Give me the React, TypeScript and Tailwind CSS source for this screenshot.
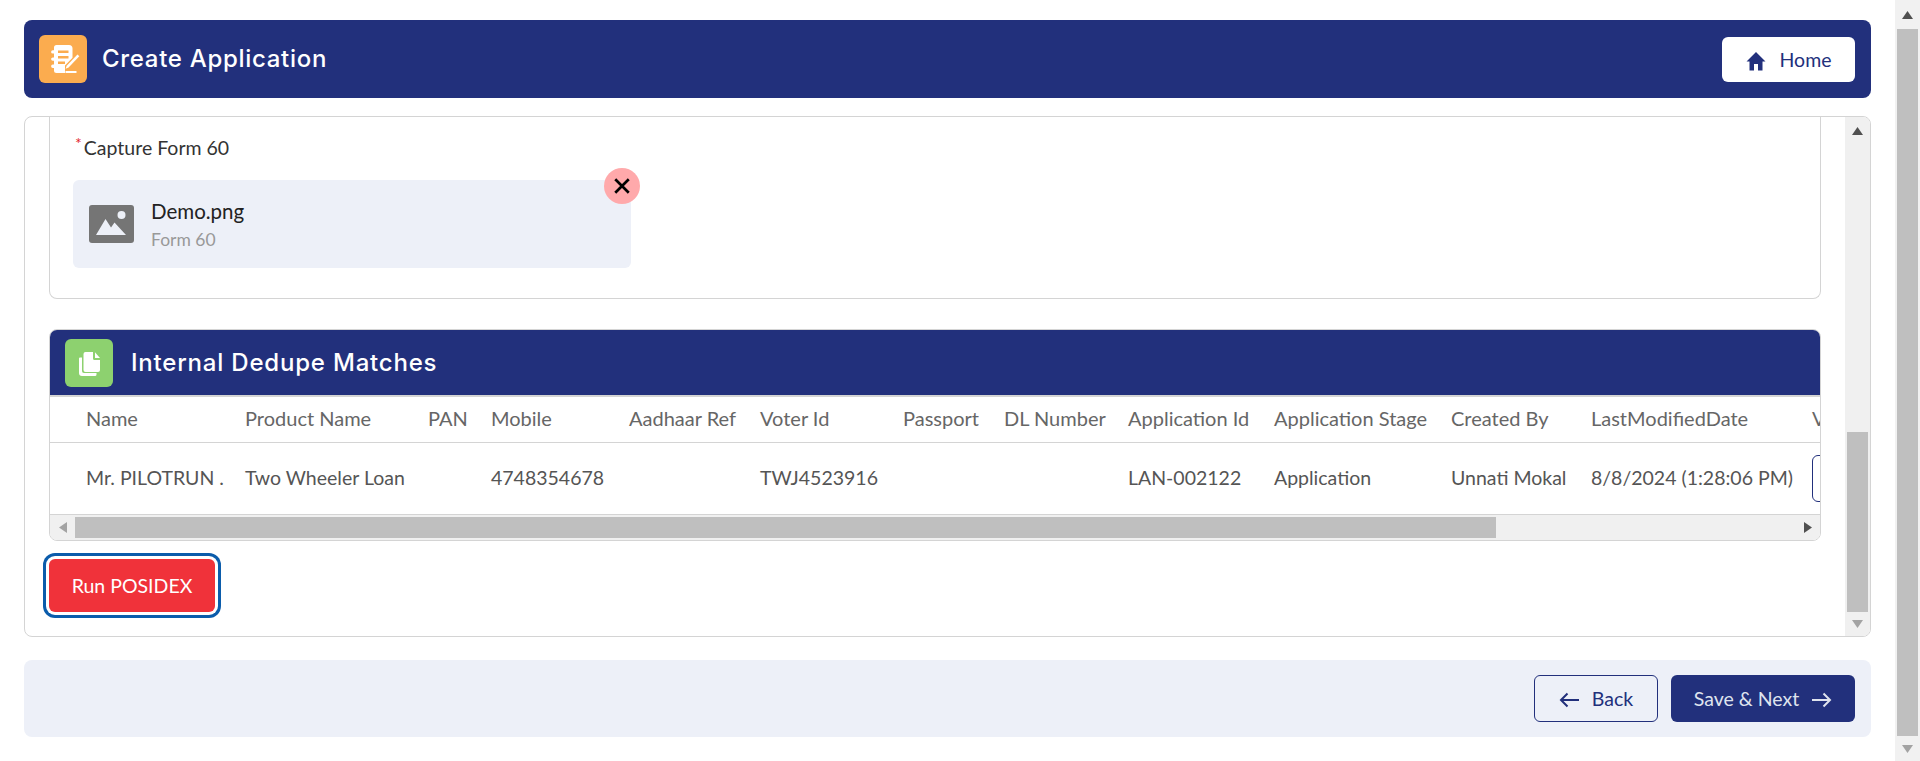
import React from "react";

const columns = [
  { label: "Name", value: "Mr. PILOTRUN .", width: "w-[195px]" },
  { label: "Product Name", value: "Two Wheeler Loan", width: "w-[183px]" },
  { label: "PAN", value: "", width: "w-[63px]" },
  { label: "Mobile", value: "4748354678", width: "w-[138px]" },
  { label: "Aadhaar Ref", value: "", width: "w-[131px]" },
  { label: "Voter Id", value: "TWJ4523916", width: "w-[143px]" },
  { label: "Passport", value: "", width: "w-[101px]" },
  { label: "DL Number", value: "", width: "w-[124px]" },
  { label: "Application Id", value: "LAN-002122", width: "w-[146px]" },
  { label: "Application Stage", value: "Application", width: "w-[177px]" },
  { label: "Created By", value: "Unnati Mokal", width: "w-[140px]" },
  { label: "LastModifiedDate", value: "8/8/2024 (1:28:06 PM)", width: "w-[221px]" },
];

function Arrow({ dir, color = "#505050" }: { dir: "up" | "down" | "left" | "right"; color?: string }) {
  const points = {
    up: "0,8 5.5,0 11,8",
    down: "0,0 5.5,8 11,0",
    left: "8,0 8,11 0,5.5",
    right: "0,0 0,11 8,5.5",
  }[dir];
  const box = dir === "up" || dir === "down" ? "0 0 11 8" : "0 0 8 11";
  const size = dir === "up" || dir === "down" ? "w-[11px] h-[8px]" : "w-[8px] h-[11px]";
  return (
    <svg viewBox={box} className={size}>
      <polygon points={points} fill={color} />
    </svg>
  );
}

function NotebookIcon() {
  return (
    <svg viewBox="0 0 48 48" className="w-12 h-12">
      <path fill="#fff" d="M15 12.5a2.5 2.5 0 0 1 2.5-2.5H30a3.5 3.5 0 0 1 3.5 3.5v9.2L26 30.5V38h-8.5a2.5 2.5 0 0 1-2.5-2.5V33h-1.200a1.600 1.600 0 0 1 0-3.400H15v-3.800h-1.200a1.600 1.600 0 0 1 0-3.400H15v-3.800h-1.200a1.600 1.600 0 0 1 0-3.400H15z" />
      <path fill="#fbac4f" d="M19 15.500h10.500v2.400H19zM19 21h10.500v2.400H19zM19 26.500h7v2.400h-7z" />
      <path fill="#fff" d="M38.500 19.500l1.800 1.700-10.700 11.300-3 1.200 1.100-3z" />
      <path fill="#fff" d="M26.500 36h11v2h-11z" />
    </svg>
  );
}

function FilesIcon() {
  return (
    <svg viewBox="0 0 48 48" className="w-12 h-12">
      <path fill="#fff" d="M15 18.500h2V32a2 2 0 0 0 2 2h12.500v1.500a1.500 1.500 0 0 1-1.500 1.500H17a3 3 0 0 1-3-3V19.500a1 1 0 0 1 1-1z" />
      <path fill="#fff" d="M20.500 13H28v6.500a1.500 1.500 0 0 0 1.500 1.500H35v10a2 2 0 0 1-2 2H20.500a2 2 0 0 1-2-2V15a2 2 0 0 1 2-2z" />
      <path fill="#fff" d="M30 13.200l5 5.800h-5z" />
    </svg>
  );
}

function ImageIcon() {
  return (
    <svg viewBox="0 0 45 38" className="w-[45px] h-[38px]">
      <rect width="45" height="38" rx="3" fill="#757575" />
      <circle cx="32.500" cy="10" r="4" fill="#edf0f8" />
      <path fill="#edf0f8" d="M7 30l9.500-16 5.500 8.500 3.500-5 11.500 12.500z" />
    </svg>
  );
}

export default function App() {
  return (
    <div className="flex h-screen overflow-hidden bg-white text-[19.5px] font-['Lato',sans-serif]">
      <div className="flex-1 min-w-0 pl-6 pr-6 pt-5 flex flex-col">
        <header className="h-[78px] shrink-0 rounded-lg bg-[#22307c] flex items-center pl-[15px] pr-4">
          <div className="w-12 h-12 rounded-md bg-[#fbac4f]">
            <NotebookIcon />
          </div>
          <h1 className="ml-[15px] text-white text-[24px] tracking-[0.7px] font-medium font-['Inter',sans-serif]">Create Application</h1>
          <button className="ml-auto w-[133px] h-[45px] rounded-md bg-white text-[#22307c] flex items-center justify-center gap-[14px]">
            <svg viewBox="0 0 20 20" className="w-5 h-5 mt-[3px]">
              <path fill="#22307c" d="M10 1L0.500 10.500H3.500V19.500H8V13H12V19.500H16.500V10.500H19.500z" />
            </svg>
            <span className="mt-[1px]">Home</span>
          </button>
        </header>

        <main className="mt-[18px] h-[521px] shrink-0 rounded-lg border border-[#d4d4d4] flex overflow-hidden">
          <div className="flex-1 min-w-0 pl-6 pr-6">
            <section className="h-[182px] border-x border-b border-[#d4d4d4] rounded-b-lg pl-[23px] pt-[19px]">
              <label className="flex h-6 items-center text-[#333]">
                <span className="text-[#e3242b] text-[16px] -mt-[11px] mr-[2px] ml-[2px]">*</span>
                <span>Capture Form 60</span>
              </label>
              <div className="relative mt-[20px] w-[558px] h-[88px] rounded-md bg-[#edf0f8] flex items-center pl-4">
                <ImageIcon />
                <div className="ml-[17px] mt-[2px]">
                  <div className="text-[20.500px] leading-[28px] text-[#222]">Demo.png</div>
                  <div className="text-[17.500px] leading-[29px] text-[#999]">Form 60</div>
                </div>
                <div className="absolute -right-[9px] -top-3 w-9 h-9 rounded-full bg-[#ffa9ab] flex items-center justify-center">
                  <svg viewBox="0 0 16 16" className="w-[18px] h-[18px]">
                    <path d="M2 2L14 14M14 2L2 14" stroke="#000" strokeWidth="2.400" />
                  </svg>
                </div>
              </div>
            </section>

            <section className="mt-[30px] h-[212px] rounded-lg border border-[#d4d4d4] overflow-hidden flex flex-col">
              <div className="h-[65px] shrink-0 bg-[#22307c] flex items-center pl-[15px]">
                <div className="w-12 h-12 rounded-md bg-[#8dd16f]">
                  <FilesIcon />
                </div>
                <h2 className="ml-[18px] text-white text-[24px] tracking-[0.8px] font-medium font-['Inter',sans-serif]">Internal Dedupe Matches</h2>
              </div>
              <div className="overflow-hidden">
                <table className="table-fixed w-[1862px] text-left border-collapse">
                  <colgroup>
                    {columns.map((c) => (
                      <col key={c.label} className={c.width} />
                    ))}
                    <col className="w-[100px]" />
                  </colgroup>
                  <thead>
                    <tr className="h-[46px] border-t-2 border-b border-[#d4d4d4] text-[#666] text-[20px]">
                      {columns.map((c, i) => (
                        <th key={c.label} className={i === 0 ? "font-normal pl-9 pb-[3px]" : "font-normal pb-[3px]"}>
                          {c.label}
                        </th>
                      ))}
                      <th className="font-normal pb-[3px]">View</th>
                    </tr>
                  </thead>
                  <tbody>
                    <tr className="h-[72px] border-b border-[#d4d4d4] text-[#555]">
                      {columns.map((c, i) => (
                        <td key={c.label} className={i === 0 ? "pl-9" : ""}>
                          {c.value}
                        </td>
                      ))}
                      <td>
                        <div className="w-20 h-[47px] rounded-md border border-[#22307c]" />
                      </td>
                    </tr>
                  </tbody>
                </table>
              </div>
              <div className="flex-1 bg-[#f0f0f0] flex items-center">
                <div className="w-[25px] flex justify-center">
                  <Arrow dir="left" color="#a3a3a3" />
                </div>
                <div className="w-[1421px] h-[21px] bg-[#bfbfbf]" />
                <div className="ml-auto w-[25px] flex justify-center">
                  <Arrow dir="right" />
                </div>
              </div>
            </section>

            <button className="mt-[18px] w-[166px] h-[53px] rounded-md bg-[#f0323a] text-white shadow-[0_0_0_3px_#fff,0_0_0_6px_#0b5cab]">
              Run POSIDEX
            </button>
          </div>

          <div className="w-[25px] shrink-0 bg-[#f0f0f0] flex flex-col items-center">
            <div className="h-[25px] mt-[1px] flex items-center">
              <Arrow dir="up" />
            </div>
            <div className="mt-[289px] w-[21px] h-[180px] bg-[#bfbfbf]" />
            <div className="flex-1 flex items-center">
              <Arrow dir="down" color="#a3a3a3" />
            </div>
          </div>
        </main>

        <footer className="mt-[23px] h-[77px] shrink-0 rounded-lg bg-[#edf0f8] flex items-center justify-end gap-[13px] pr-4">
          <button className="w-[124px] h-[47px] rounded-md border border-[#22307c] text-[#22307c] flex items-center justify-center gap-[13px]">
            <svg viewBox="0 0 20 16" className="w-5 h-4 mt-[2px]">
              <path d="M20 8H2M8.500 1.500L2 8l6.500 6.500" fill="none" stroke="#22307c" strokeWidth="2" />
            </svg>
            <span>Back</span>
          </button>
          <button className="w-[184px] h-[47px] rounded-md bg-[#22307c] text-[#dfe3ee] flex items-center justify-center gap-[13px]">
            <span>Save &amp; Next</span>
            <svg viewBox="0 0 20 16" className="w-5 h-4 mt-[2px]">
              <path d="M0 8H18M11.500 1.500L18 8l-6.500 6.500" fill="none" stroke="#dfe3ee" strokeWidth="2" />
            </svg>
          </button>
        </footer>
      </div>

      <div className="w-[25px] shrink-0 bg-[#f1f1f1] flex flex-col items-center">
        <div className="h-[29px] flex items-center">
          <Arrow dir="up" />
        </div>
        <div className="w-[21px] h-[707px] bg-[#bfbfbf]" />
        <div className="flex-1 flex items-center">
          <Arrow dir="down" color="#a3a3a3" />
        </div>
      </div>
    </div>
  );
}
